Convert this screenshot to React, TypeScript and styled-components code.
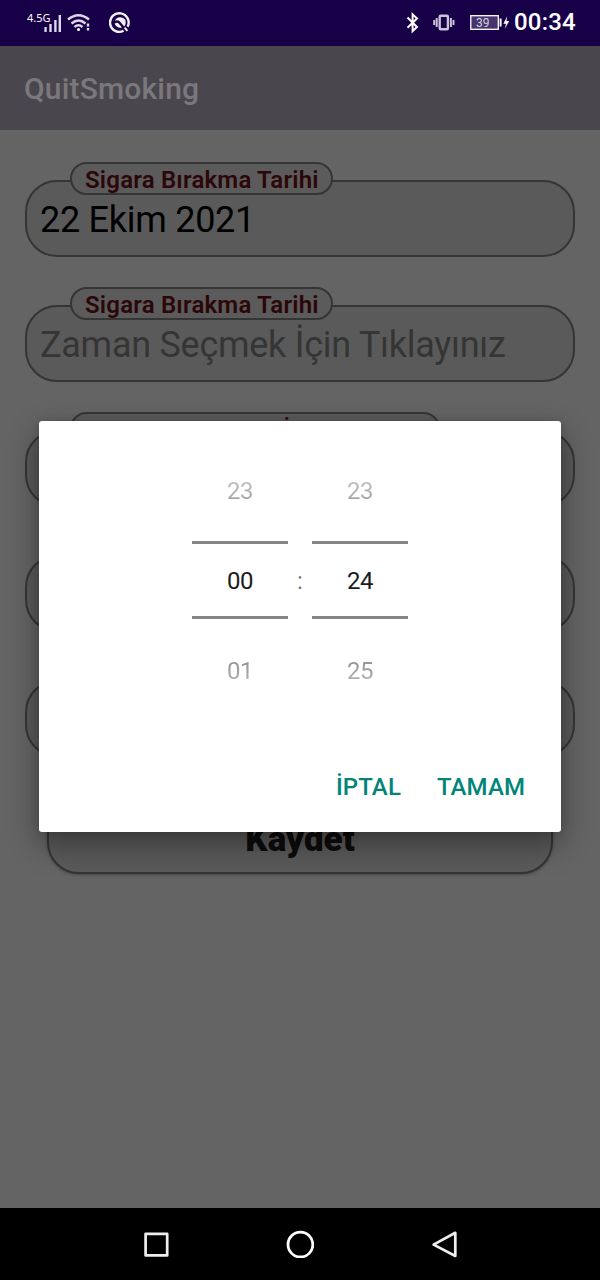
import React from "react";
import styled, { createGlobalStyle } from "styled-components";

const GlobalStyle = createGlobalStyle`
  * { box-sizing: border-box; }
  body { margin: 0; background: #000; font-family: Roboto, "Liberation Sans", sans-serif; }
`;

const Screen = styled.div`
  position: relative;
  display: flex;
  flex-direction: column;
  width: 600px;
  height: 1280px;
  background: #646464;
  overflow: hidden;
`;

const StatusBar = styled.header`
  display: flex;
  justify-content: space-between;
  flex: none;
  height: 46px;
  padding: 0 24px 0 27px;
  background: #180048;
  color: #fff;
`;

const StatusGroup = styled.div`
  display: flex;
  align-items: center;
`;

const StatusIcon = styled.svg<{ $gap?: number }>`
  display: block;
  flex: none;
  margin-left: ${(p) => p.$gap ?? 0}px;
`;

const NetworkType = styled.span`
  align-self: flex-start;
  width: 17px;
  margin-top: 11px;
  font: 11px/14px "Noto Sans", sans-serif;
  white-space: nowrap;
`;

const Clock = styled.span`
  margin-left: 4px;
  font-size: 24px;
  font-weight: 500;
  line-height: 44px;
  height: 46px;
  width: 62px;
  letter-spacing: 0.2px;
  white-space: nowrap;
`;

const AppBar = styled.div`
  display: flex;
  align-items: center;
  flex: none;
  height: 84px;
  padding: 1px 24px 0;
  background: #4a464d;
  color: #7b787d;
  font-size: 30px;
  font-weight: 500;
  letter-spacing: 0.17px;
`;

const Form = styled.main`
  display: flex;
  flex-direction: column;
  flex: 1;
  min-height: 0;
  padding: 50px 25px 0;
`;

const Field = styled.div`
  display: flex;
  flex-direction: column;
  flex: none;
  height: 77px;
  margin-bottom: 48px;
  border: 2px solid #353535;
  border-radius: 32px;
  background: #5a5a5a;
`;

const FieldLabel = styled.span<{ $width: number; $tight?: boolean }>`
  align-self: flex-start;
  width: ${(p) => p.$width}px;
  height: 33px;
  margin: -20px 0 0 43px;
  padding-left: 13px;
  border: 2px solid #353535;
  border-radius: 17px;
  background: #5b5b5b;
  color: #2c0709;
  font-size: 24px;
  font-weight: 600;
  line-height: ${(p) => (p.$tight ? 35 : 33)}px;
  letter-spacing: ${(p) => (p.$tight ? 0.1 : 0.2)}px;
  white-space: nowrap;
`;

const FieldValue = styled.span<{ $hint?: boolean }>`
  padding-left: 13px;
  color: ${(p) => (p.$hint ? "#353535" : "#000")};
  font-size: 36px;
  line-height: 51px;
  letter-spacing: -0.27px;
  white-space: nowrap;
`;

const SaveButton = styled.button`
  flex: none;
  height: 72px;
  margin: -3px 22px 0;
  padding: 3px 0 0;
  border: 2px solid #353535;
  border-radius: 32px;
  background: #5a5a5a;
  box-shadow: 0 1px 3px rgba(0, 0, 0, 0.3);
  color: #0c0c0c;
  font: 900 35px/60px Roboto, sans-serif;
`;

const Dialog = styled.section`
  position: absolute;
  top: 421px;
  left: 39px;
  display: flex;
  flex-direction: column;
  width: 522px;
  height: 411px;
  border-radius: 3px;
  background: #fff;
  box-shadow: 0 12px 30px rgba(0, 0, 0, 0.38), 0 0 8px rgba(0, 0, 0, 0.12);
`;

const Pickers = styled.div`
  display: flex;
  justify-content: center;
  align-items: flex-start;
  padding-top: 30px;
`;

const Wheel = styled.div`
  display: flex;
  flex-direction: column;
  width: 96px;
`;

const WheelItem = styled.span<{ $fade: "up" | "down" }>`
  height: 90px;
  font-size: 24px;
  line-height: 80px;
  letter-spacing: -0.4px;
  text-align: center;
  color: transparent;
  background: linear-gradient(to ${(p) => (p.$fade === "up" ? "top" : "bottom")}, #808080 20%, #ccc 75%);
  background-clip: text;
  -webkit-background-clip: text;
`;

const Selected = styled.div`
  height: 78px;
  margin: 0 0 12px;
  border-top: 3px solid #858585;
  border-bottom: 3px solid #858585;
  color: #1b1b1b;
  font-size: 24px;
  line-height: 75px;
  letter-spacing: -0.4px;
  text-align: center;
`;

const Colon = styled.span`
  width: 24px;
  margin-top: 91px;
  color: #757575;
  font-size: 24px;
  line-height: 79px;
  text-align: center;
`;

const Actions = styled.div`
  display: flex;
  justify-content: flex-end;
  gap: 36px;
  margin-top: auto;
  padding: 0 36px 31px 0;
`;

const Action = styled.button`
  padding: 0;
  border: 0;
  background: none;
  color: #008577;
  font: 500 24px/28px Roboto, sans-serif;
  letter-spacing: 0.1px;
`;

const NavBar = styled.nav`
  display: flex;
  justify-content: space-around;
  align-items: center;
  flex: none;
  height: 72px;
  padding: 0 84px;
  background: #000;
`;

const values = [
  { label: "Sigara Bırakma Tarihi", width: 263, text: "22 Ekim 2021" },
  { label: "Sigara Bırakma Tarihi", width: 263, text: "Zaman Seçmek İçin Tıklayınız", hint: true },
  { label: "Günde Kaç Sigara İçiyorsunuz?", width: 370, text: "", tight: true },
  { label: "", width: 0, text: "" },
  { label: "", width: 0, text: "" },
];

function NumberWheel({ before, value, after }: { before: string; value: string; after: string }) {
  return (
    <Wheel>
      <WheelItem $fade="up">{before}</WheelItem>
      <Selected>{value}</Selected>
      <WheelItem $fade="down">{after}</WheelItem>
    </Wheel>
  );
}

export default function App() {
  return (
    <>
      <GlobalStyle />
      <Screen>
        <StatusBar>
          <StatusGroup>
            <NetworkType>4.5G</NetworkType>
            <StatusIcon width="18" height="46" fill="#ded8ea">
              <path d="M0.4 27h2.3v5h-2.3zM5.3 24h2.4v8h-2.4zM10.2 20h2.4v12h-2.4zM14.6 15h2.4v17h-2.4z" />
            </StatusIcon>
            <StatusIcon $gap={5} width="24" height="46" fill="none" stroke="#ded8ea" strokeWidth="2.4">
              <path d="M1 19.5Q11.5 11 22 19.5M4.5 23.5Q11.5 17.5 18.5 23.5M7.5 27Q11.5 23.7 15.5 27" />
              <circle cx="11.5" cy="29.4" r="1.5" fill="#fff" stroke="none" />
              <path d="M21 23.5v3M21 28v2.5" strokeWidth="2.4" />
            </StatusIcon>
            <StatusIcon $gap={18} width="24" height="46" fill="none" stroke="#f2eff6" strokeWidth="2.4">
              <path d="M14.6 30.8A9.3 9.3 0 1 1 18.6 26.8" />
              <path d="M5.8 20.8A6 6 0 0 1 16.4 20Q17.4 24.2 15.2 26.6L11 21.4Q8.3 19.4 5.8 20.8Z" fill="#f2eff6" stroke="none" />
              <path d="M5.6 23.8Q8.2 21.8 10 24L13 27.4Q8.4 28.8 5.6 23.8Z" fill="#f2eff6" stroke="none" />
              <path d="M15.6 27.6L18.4 30.8" strokeWidth="2" />
            </StatusIcon>
          </StatusGroup>
          <StatusGroup>
            <StatusIcon width="14" height="46" fill="none" stroke="#fff" strokeWidth="2">
              <path d="M1.5 17.5L11 27L6.6 31.2V14.3L11 18.4L1.5 27.8" />
            </StatusIcon>
            <StatusIcon $gap={13} width="22" height="46" fill="none" stroke="#c9c2d8" strokeWidth="2.4">
              <rect x="6.7" y="15.7" width="8.2" height="13.5" rx="1" />
              <path d="M3.7 18v9M1.2 20v5M17.9 18v9M20.5 20v5" strokeWidth="2" />
            </StatusIcon>
            <StatusIcon $gap={15} width="40" height="46">
              <rect x="0.8" y="15.7" width="27.5" height="13.6" fill="#46346c" stroke="#fff" strokeWidth="1.3" />
              <path d="M29.6 18.5h2v8h-2z" fill="#fff" />
              <path d="M37.3 16.3L33.3 23.7H36L34.7 28.9L39.2 21.1H36.4Z" fill="#fff" />
              <text x="12.8" y="26.8" textAnchor="middle" fontSize="12" fontFamily="Roboto" fill="#d6d0e2">39</text>
            </StatusIcon>
            <Clock>00:34</Clock>
          </StatusGroup>
        </StatusBar>
        <AppBar>QuitSmoking</AppBar>
        <Form>
          {values.map((field, i) => (
            <Field key={i}>
              {field.label && (
                <FieldLabel $width={field.width} $tight={field.tight}>
                  {field.label}
                </FieldLabel>
              )}
              {field.text && <FieldValue $hint={field.hint}>{field.text}</FieldValue>}
            </Field>
          ))}
          <SaveButton>Kaydet</SaveButton>
        </Form>
        <NavBar>
          <svg width="28" height="28" fill="none" stroke="#eee" strokeWidth="2.7" strokeLinejoin="round">
            <rect x="3.6" y="3.8" width="21.6" height="21.6" />
          </svg>
          <svg width="28" height="28" fill="none" stroke="#fff" strokeWidth="2.8">
            <circle cx="14.4" cy="14.6" r="12.4" />
          </svg>
          <svg width="28" height="28" fill="none" stroke="#eee" strokeWidth="2.7" strokeLinejoin="round">
            <path d="M25.3 2.8V26L3.6 14.6Z" />
          </svg>
        </NavBar>
        <Dialog>
          <Pickers>
            <NumberWheel before="23" value="00" after="01" />
            <Colon>:</Colon>
            <NumberWheel before="23" value="24" after="25" />
          </Pickers>
          <Actions>
            <Action>İPTAL</Action>
            <Action>TAMAM</Action>
          </Actions>
        </Dialog>
      </Screen>
    </>
  );
}
